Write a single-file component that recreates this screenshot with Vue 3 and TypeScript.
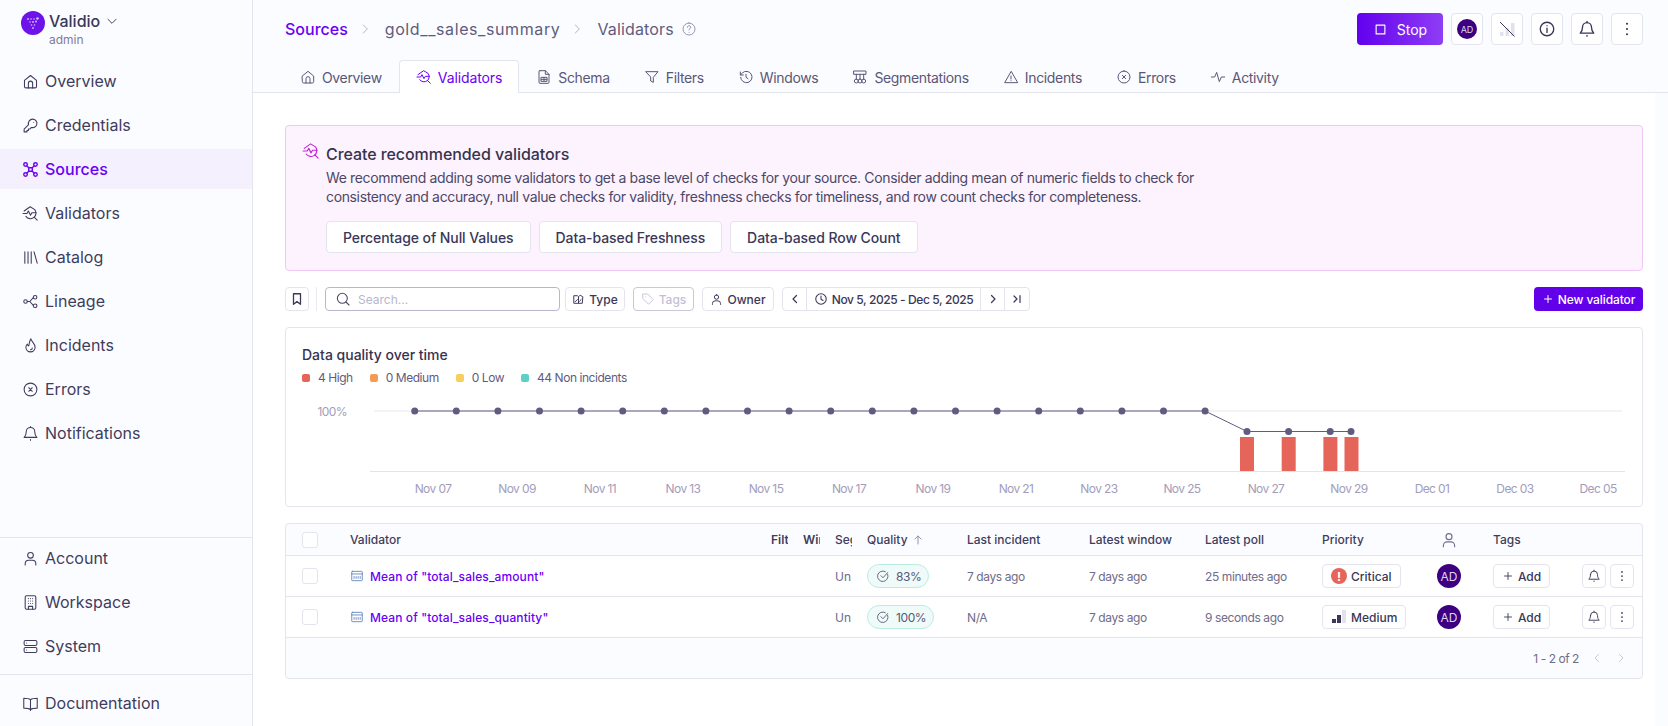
<script setup lang="ts">
import { h } from 'vue'

const paths: Record<string, string[]> = {
  home: ['M3.5 10.5 12 3.5l8.5 7V19a2 2 0 0 1-2 2h-13a2 2 0 0 1-2-2z', 'M9 21v-6.5a3 3 0 0 1 6 0V21'],
  key: ['M15 3a6 6 0 1 1-1.8 11.7L11 17H9v2H7v2H3v-4l6.3-6.3A6 6 0 0 1 15 3z', 'M16.5 7.5h.01'],
  sources: ['M5 2.5a2.5 2.5 0 1 1 0 5 2.5 2.5 0 0 1 0-5zM19 2.5a2.5 2.5 0 1 1 0 5 2.5 2.5 0 0 1 0-5zM5 16.5a2.5 2.5 0 1 1 0 5 2.5 2.5 0 0 1 0-5zM19 16.5a2.5 2.5 0 1 1 0 5 2.5 2.5 0 0 1 0-5z', 'M7 7l2.5 2.5h5L17 7M7 17l2.5-2.5h5L17 17M9.5 9.5v5M14.5 9.5v5'],
  validators: ['M3 8.5 11.5 2.500l6.500 4a8 8 0 0 1-1 11 8 8 0 0 1-11.500-1.500', 'M1.5 12h5.5l2-3.5 3 6 2-3.5h6', 'M17 17l4.500 4.500'],
  catalog: ['M4 4v16M8.5 4v16M13 4v16M17 4l4.500 16'],
  lineage: ['M5 9.5a2.5 2.5 0 1 1 0 5 2.5 2.5 0 0 1 0-5zM18.5 3.5a2.5 2.5 0 1 1 0 5 2.5 2.5 0 0 1 0-5zM18.5 15.5a2.5 2.5 0 1 1 0 5 2.5 2.5 0 0 1 0-5z', 'M7.5 12H11l5-5.5M11 12l5 5.5'],
  flame: ['M12.5 2.5c.5 4 6 6.5 6 12a6.5 6.5 0 0 1-13 0c0-2 .8-3.3 2-4.5.3 1.5 1 2.300 2 2.500 1-3 .8-6.500 3-10z', 'M12 18a2.500 2.500 0 0 0 2.500-2.500'],
  xcircle: ['M12 3a9 9 0 1 1 0 18 9 9 0 0 1 0-18z', 'M9.500 9.500l5 5M14.500 9.500l-5 5'],
  bell: ['M6 9.500a6 6 0 0 1 12 0c0 4.500 1.500 6.500 3 8H3c1.500-1.500 3-3.500 3-8z', 'M12 2v1.500M12 20.500v1'],
  user: ['M12 3.500a4 4 0 1 1 0 8 4 4 0 0 1 0-8z', 'M4.500 21v-1.500a5 5 0 0 1 5-5h5a5 5 0 0 1 5 5V21'],
  building: ['M6.500 2.500h11a2 2 0 0 1 2 2v15a2 2 0 0 1-2 2h-11a2 2 0 0 1-2-2v-15a2 2 0 0 1 2-2z', 'M9 6.500h.01M12 6.500h.01M15 6.500h.01M9 10h.01M12 10h.01M15 10h.01M9 13.500h.01M12 13.500h.01M15 13.500h.01', 'M9 21.500v-4h6v4'],
  server: ['M5 3.500h14a2 2 0 0 1 2 2v3a2 2 0 0 1-2 2H5a2 2 0 0 1-2-2v-3a2 2 0 0 1 2-2zM5 13.500h14a2 2 0 0 1 2 2v3a2 2 0 0 1-2 2H5a2 2 0 0 1-2-2v-3a2 2 0 0 1 2-2z', 'M6.500 7h.01M6.500 17h.01'],
  book: ['M12 6.500C10 5 7 4.500 2.500 4.500v14c4.500 0 7.500.5 9.500 2 2-1.500 5-2 9.500-2v-14C17 4.500 14 5 12 6.500z', 'M12 6.500V22'],
  help: ['M12 3a9 9 0 1 1 0 18 9 9 0 0 1 0-18z', 'M9.500 9.500a2.500 2.500 0 1 1 3.700 2.200c-.8.4-1.200 1-1.200 1.800M12 17h.01'],
  schema: ['M6 2.500h8l5.500 5.500v12a1.500 1.500 0 0 1-1.500 1.500H6A1.500 1.500 0 0 1 4.500 20V4A1.500 1.500 0 0 1 6 2.500z', 'M14 2.500V8h5.500', 'M8 12.500h8.500v6H8zM8 15.500h8.500M12 12.500v6'],
  filter: ['M3 4h18l-7 8.500V20l-4-2v-5.500z'],
  windows: ['M4 12.500A8.500 8.500 0 1 0 6.500 6L3.500 9', 'M3.500 4.500V9H8', 'M12 8v4.500l3 2'],
  seg: ['M3 3h18v5H3zM6.500 8v6M12 8v6M17.500 8v6', 'M6.500 15a3 3 0 1 1 0 6 3 3 0 0 1 0-6zM12 15a3 3 0 1 1 0 6 3 3 0 0 1 0-6zM17.500 15a3 3 0 1 1 0 6 3 3 0 0 1 0-6z'],
  triangle: ['M12 4 2.500 20.500h19z', 'M12 10.500v4.500M12 17.500h.01'],
  activity: ['M2 12h5l3-7 4 14 3-7h5'],
  stop: ['M5 5h14v14H5z'],
  info: ['M12 3a9 9 0 1 1 0 18 9 9 0 0 1 0-18z', 'M12 11v5.500M12 7.500h.01'],
  dots: ['M12 5h.01M12 12h.01M12 19h.01'],
  down: ['M5 9l7 7 7-7'],
  right: ['M9 5l7 7-7 7'],
  left: ['M15 5l-7 7 7 7'],
  last: ['M6 6l6 6-6 6M18 5v14'],
  bookmark: ['M6 3h12v18l-6-4.500L6 21z'],
  search: ['M11 3.500a7.500 7.500 0 1 1 0 15 7.500 7.500 0 0 1 0-15z', 'M16.500 16.500 21 21'],
  type: ['M4 5h6l2 2v12H4zM12 7l3-3 5 3-1 12H12', 'M6 16l4-4M14 15l3-3'],
  tag: ['M3.500 3.500h8l9.500 9.500-8 8-9.500-9.500z', 'M8 8h.01'],
  clock: ['M12 3a9 9 0 1 1 0 18 9 9 0 0 1 0-18z', 'M12 7v5.500l3.500 2'],
  up: ['M12 20V4M6 10l6-6 6 6'],
  plus: ['M12 5v14M5 12h14'],
  gauge: ['M20 9a9 9 0 1 1-4-4.500', 'M8.500 11.500 12 15l8-9'],
  mean: ['M4 4h16a1 1 0 0 1 1 1v14a1 1 0 0 1-1 1H4a1 1 0 0 1-1-1V5a1 1 0 0 1 1-1z', 'M3 8.500h18', 'M7 13v3M10.500 13v3M14 13v3M17.500 13v3'],
}

const Icon = (props: { name: string; size?: number; sw?: number }) =>
  h(
    'svg',
    {
      width: props.size ?? 16,
      height: props.size ?? 16,
      viewBox: '0 0 24 24',
      fill: 'none',
      stroke: 'currentColor',
      'stroke-width': props.sw ?? 1.6,
      'stroke-linecap': 'round',
      'stroke-linejoin': 'round',
    },
    (paths[props.name] ?? []).map((d) => h('path', { d })),
  )
Icon.props = ['name', 'size', 'sw']

const mainNav = [
  { label: 'Overview', icon: 'home' },
  { label: 'Credentials', icon: 'key' },
  { label: 'Sources', icon: 'sources', active: true },
  { label: 'Validators', icon: 'validators' },
  { label: 'Catalog', icon: 'catalog' },
  { label: 'Lineage', icon: 'lineage' },
  { label: 'Incidents', icon: 'flame' },
  { label: 'Errors', icon: 'xcircle' },
  { label: 'Notifications', icon: 'bell' },
]
const lowerNav = [
  { label: 'Account', icon: 'user' },
  { label: 'Workspace', icon: 'building' },
  { label: 'System', icon: 'server' },
]
const tabs = [
  { label: 'Overview', icon: 'home' },
  { label: 'Validators', icon: 'validators', active: true },
  { label: 'Schema', icon: 'schema' },
  { label: 'Filters', icon: 'filter' },
  { label: 'Windows', icon: 'windows' },
  { label: 'Segmentations', icon: 'seg' },
  { label: 'Incidents', icon: 'triangle' },
  { label: 'Errors', icon: 'xcircle' },
  { label: 'Activity', icon: 'activity' },
]
const recommended = ['Percentage of Null Values', 'Data-based Freshness', 'Data-based Row Count']
const legend = [
  { label: '4 High', color: '#e5655a' },
  { label: '0 Medium', color: '#f39a55' },
  { label: '0 Low', color: '#f7cf5c' },
  { label: '44 Non incidents', color: '#5fd0c5' },
]

const highDots = Array.from({ length: 20 }, (_, i) => 414.7 + i * 41.6)
const lowDots = [1247, 1288.6, 1330.2, 1351]
const bars = [1240, 1281.7, 1323.4, 1344.5]
const xLabels = [
  ['Nov 07', 433], ['Nov 09', 517], ['Nov 11', 600], ['Nov 13', 683], ['Nov 15', 766],
  ['Nov 17', 849], ['Nov 19', 933], ['Nov 21', 1016], ['Nov 23', 1099], ['Nov 25', 1182],
  ['Nov 27', 1266], ['Nov 29', 1349], ['Dec 01', 1432], ['Dec 03', 1515], ['Dec 05', 1598],
] as [string, number][]

const rows = [
  { name: 'Mean of "total_sales_amount"', quality: '83%', incident: '7 days ago', win: '7 days ago', poll: '25 minutes ago', priority: 'Critical' },
  { name: 'Mean of "total_sales_quantity"', quality: '100%', incident: 'N/A', win: '7 days ago', poll: '9 seconds ago', priority: 'Medium' },
]
</script>

<template>
  <div class="app">
    <aside class="side">
      <div class="brand">
        <svg class="logo" width="24" height="24" viewBox="0 0 24 24">
          <circle cx="12" cy="12" r="12" fill="#6d12e8" />
          <g fill="#d9bdf8">
            <circle cx="7" cy="8" r=".9" /><circle cx="10" cy="8" r=".8" /><circle cx="13" cy="8" r=".8" /><circle cx="16.500" cy="7.500" r="1.300" />
            <circle cx="9" cy="11" r=".8" /><circle cx="12" cy="11" r=".9" /><circle cx="15" cy="10.500" r="1" />
            <circle cx="10.500" cy="14" r=".8" /><circle cx="13.500" cy="14" r=".8" /><circle cx="12" cy="17" r=".9" />
          </g>
        </svg>
        <div class="brand-text">
          <div class="brand-name">Validio <Icon name="down" :size="14" /></div>
          <div class="brand-role">admin</div>
        </div>
      </div>
      <nav class="nav">
        <a v-for="n in mainNav" :key="n.label" class="nav-item" :class="{ active: n.active }">
          <Icon :name="n.icon" :size="17" :sw="n.active ? 2 : 1.500" /><span>{{ n.label }}</span>
        </a>
      </nav>
      <nav class="nav lower">
        <a v-for="n in lowerNav" :key="n.label" class="nav-item">
          <Icon :name="n.icon" :size="17" :sw="1.500" /><span>{{ n.label }}</span>
        </a>
      </nav>
      <nav class="nav docs">
        <a class="nav-item"><Icon name="book" :size="17" :sw="1.500" /><span>Documentation</span></a>
      </nav>
    </aside>

    <main class="main">
      <header class="head">
        <div class="topbar">
          <div class="crumbs">
            <span class="crumb-link">Sources</span>
            <Icon class="crumb-sep" name="right" :size="14" :sw="1.400" />
            <span class="crumb-source">gold__sales_summary</span>
            <Icon class="crumb-sep" name="right" :size="14" :sw="1.400" />
            <span class="crumb-page">Validators</span>
            <Icon class="crumb-help" name="help" :size="16" :sw="1.300" />
          </div>
          <div class="top-actions">
            <button class="stop"><Icon name="stop" :size="15" :sw="1.800" />Stop</button>
            <button class="square"><span class="avatar small">AD</span></button>
            <button class="square">
              <svg width="18" height="18" viewBox="0 0 18 18">
                <rect x="2" y="12" width="3.500" height="4" fill="#e2e2ec" />
                <rect x="7.500" y="8" width="3.500" height="8" fill="#e2e2ec" />
                <rect x="13" y="3" width="3.500" height="13" fill="#e2e2ec" />
                <path d="M2 2l14.500 14.500" stroke="#3a3758" stroke-width="1" />
              </svg>
            </button>
            <button class="square"><Icon name="info" :size="18" :sw="1.800" /></button>
            <button class="square"><Icon name="bell" :size="18" :sw="1.800" /></button>
            <button class="square"><Icon name="dots" :size="18" :sw="2.800" /></button>
          </div>
        </div>
        <div class="tabs">
          <div v-for="t in tabs" :key="t.label" class="tab" :class="{ active: t.active }">
            <Icon :name="t.icon" :size="16" :sw="1.500" /><span>{{ t.label }}</span>
          </div>
        </div>
      </header>

      <div class="body">
        <div class="content">
          <section class="banner">
            <Icon class="banner-icon" name="validators" :size="18" :sw="1.500" />
            <div class="banner-main">
              <h2 class="banner-title">Create recommended validators</h2>
              <p class="banner-text">We recommend adding some validators to get a base level of checks for your source. Consider adding mean of numeric fields to check for consistency and accuracy, null value checks for validity, freshness checks for timeliness, and row count checks for completeness.</p>
              <div class="banner-btns">
                <button v-for="r in recommended" :key="r" class="rec">{{ r }}</button>
              </div>
            </div>
          </section>

          <div class="toolbar">
            <button class="tool icon-only"><Icon name="bookmark" :size="14" :sw="2.200" /></button>
            <span class="vsep"></span>
            <label class="search">
              <Icon name="search" :size="16" :sw="1.600" />
              <span class="placeholder">Search...</span>
            </label>
            <button class="tool t-type"><Icon name="type" :size="13" :sw="1.800" />Type</button>
            <button class="tool t-tags"><Icon name="tag" :size="14" :sw="1.500" />Tags</button>
            <button class="tool t-owner"><Icon name="user" :size="13" :sw="1.800" />Owner</button>
            <div class="range">
              <span class="range-btn w25"><Icon name="left" :size="12" :sw="2.400" /></span>
              <span class="range-btn date"><Icon name="clock" :size="14" :sw="1.800" />Nov 5, 2025 - Dec 5, 2025</span>
              <span class="range-btn w24"><Icon name="right" :size="12" :sw="2.400" /></span>
              <span class="range-btn w24 last"><Icon name="last" :size="12" :sw="2.400" /></span>
            </div>
            <button class="new"><Icon name="plus" :size="12" :sw="2" />New validator</button>
          </div>

          <section class="card chart">
            <h3 class="chart-title">Data quality over time</h3>
            <div class="legend">
              <span v-for="l in legend" :key="l.label" class="legend-item">
                <i class="swatch" :style="{ background: l.color }"></i>{{ l.label }}
              </span>
            </div>
            <svg class="plot" width="1356" height="110" viewBox="286 396 1356 110">
              <text x="347" y="416" text-anchor="end" class="tick">100%</text>
              <line x1="374" y1="411" x2="1622" y2="411" stroke="#f3f3f6" stroke-width="2" />
              <line x1="370" y1="471.500" x2="1625" y2="471.500" stroke="#e3e3ee" />
              <rect v-for="b in bars" :key="b" :x="b" y="437" width="14" height="34" fill="#e5655a" />
              <line x1="414.700" y1="411" x2="1205" y2="411" stroke="#a9a6bd" stroke-width="2" />
              <polyline points="1205,411 1247,431.500 1351,431.500" fill="none" stroke="#5f5c80" stroke-width="1" />
              <circle v-for="d in highDots" :key="d" :cx="d" cy="411" r="3.500" fill="#5f5c80" />
              <circle v-for="d in lowDots" :key="d" :cx="d" cy="431.500" r="3.500" fill="#5f5c80" />
              <text v-for="x in xLabels" :key="x[0]" :x="x[1]" y="493" text-anchor="middle" class="tick">{{ x[0] }}</text>
            </svg>
          </section>

          <section class="card table">
            <div class="cols thead">
              <div><span class="check"></span></div>
              <div>Validator</div>
              <div class="clip strong">Filters</div>
              <div class="clip strong">Windows</div>
              <div class="clip">Segments</div>
              <div class="quality-h">Quality <Icon class="sort" name="up" :size="12" :sw="1.800" /></div>
              <div>Last incident</div>
              <div>Latest window</div>
              <div>Latest poll</div>
              <div>Priority</div>
              <div class="owner-h"><Icon name="user" :size="18" :sw="1.500" /></div>
              <div>Tags</div>
            </div>
            <div v-for="r in rows" :key="r.name" class="cols trow">
              <div><span class="check"></span></div>
              <div class="name"><Icon class="mean" name="mean" :size="14" :sw="1.500" /><span>{{ r.name }}</span></div>
              <div></div>
              <div></div>
              <div class="clip un">Unsegmented</div>
              <div><span class="pill"><Icon name="gauge" :size="14" :sw="1.500" />{{ r.quality }}</span></div>
              <div>{{ r.incident }}</div>
              <div>{{ r.win }}</div>
              <div>{{ r.poll }}</div>
              <div>
                <span class="prio">
                  <span v-if="r.priority === 'Critical'" class="crit">!</span>
                  <svg v-else width="16" height="16" viewBox="0 0 16 16">
                    <rect x="1" y="10" width="4" height="4" fill="#3a3758" />
                    <rect x="6" y="6" width="4" height="8" fill="#3a3758" />
                    <rect x="11" y="1" width="4" height="13" fill="#e2e2ec" />
                  </svg>
                  {{ r.priority }}
                </span>
              </div>
              <div><span class="avatar">AD</span></div>
              <div class="tags">
                <span class="add"><Icon name="plus" :size="12" :sw="1.800" />Add</span>
                <span class="row-actions">
                  <span class="mini"><Icon name="bell" :size="14" :sw="1.600" /></span>
                  <span class="mini"><Icon name="dots" :size="14" :sw="3" /></span>
                </span>
              </div>
            </div>
            <div class="tfoot">
              <span>1 - 2 of 2</span>
              <Icon class="pg" name="left" :size="12" :sw="1.600" />
              <Icon class="pg" name="right" :size="12" :sw="1.600" />
            </div>
          </section>
        </div>
        <div class="track"></div>
      </div>
    </main>
  </div>
</template>

<style>
html, body { margin: 0; background: #fff; }
</style>

<style scoped>
.app { display: flex; width: 1668px; height: 726px; overflow: hidden; font-family: Inter, "Liberation Sans", sans-serif; color: #3a3758; background: #fff; }
.side { width: 252px; flex: none; display: flex; flex-direction: column; background: #fbfcff; border-right: 1px solid #e4e4ee; }
.brand { display: flex; gap: 4px; padding: 11px 0 0 21px; height: 50px; }
.logo { flex: none; }
.brand-name { display: flex; align-items: center; gap: 5px; font-size: 16px; font-weight: 500; line-height: 20px; }
.brand-role { font-size: 12px; color: #7f7b9b; line-height: 16px; margin-top: 1px; }
.nav { display: flex; flex-direction: column; gap: 4px; }
.nav-item { display: flex; align-items: center; gap: 6px; height: 40px; padding-left: 22px; font-size: 16px; color: #3f3c5c; }
.nav-item.active { background: #f4f0fd; color: #6a00f5; font-weight: 500; }
.lower { margin-top: auto; border-top: 1px solid #e4e4ee; }
.docs { margin-top: 8px; border-top: 1px solid #e4e4ee; padding: 8px 0 3px; }

.main { flex: 1; min-width: 0; display: flex; flex-direction: column; }
.head { background: #fbfcff; border-bottom: 1px solid #e4e4ee; height: 93px; box-sizing: border-box; flex: none; }
.topbar { display: flex; align-items: center; justify-content: space-between; height: 58px; margin-bottom: 2px; padding: 0 25px 0 32px; box-sizing: border-box; }
.crumbs { display: flex; align-items: center; font-size: 16px; color: #5f5c7e; }
.crumb-link { color: #6a00f5; font-weight: 500; }
.crumb-sep { margin: 0 13px 0 10px; color: #a6a3bc; }
.crumb-source { letter-spacing: .6px; }
.crumb-page { letter-spacing: .15px; }
.crumb-help { margin-left: 7px; color: #8a87a3; }
.top-actions { display: flex; gap: 8px; align-items: center; }
button { font-family: inherit; cursor: pointer; }
.stop { display: flex; align-items: center; justify-content: center; gap: 9px; width: 86px; height: 32px; border: 0; border-radius: 4px; color: #fff; font-size: 14px; background: linear-gradient(90deg, #6200ee, #8f3df5); }
.square { display: flex; align-items: center; justify-content: center; width: 32px; height: 32px; padding: 0; background: #fff; border: 1px solid #e4e4ee; border-radius: 4px; color: #3a3758; }
.avatar { display: inline-flex; align-items: center; justify-content: center; width: 24px; height: 24px; border-radius: 50%; background: #3d0080; color: #ddd6ee; font-size: 12px; letter-spacing: 0; }
.avatar.small { width: 20px; height: 20px; font-size: 9px; }
.tabs { display: flex; padding-left: 30px; height: 32px; }
.tab { display: flex; align-items: center; gap: 6px; height: 32px; padding: 0 16px; border: 1px solid transparent; border-bottom: 0; font-size: 14px; letter-spacing: -.35px; color: #5a5776; }
.tab.active { background: #fff; color: #6a00f5; border-color: #e4e4ee; border-radius: 4px 4px 0 0; letter-spacing: -.1px; }

.body { flex: 1; display: flex; min-height: 0; }
.content { flex: 1; min-width: 0; padding: 32px 12px 0 32px; }
.track { width: 13px; flex: none; background: #fbfcff; }
.banner { display: flex; box-sizing: border-box; height: 146px; padding: 16px 16px 0 16px; gap: 4px; background: #fdf3fe; border: 1px solid #f2c7f7; border-radius: 4px; }
.banner-icon { color: #c026d3; flex: none; }
.banner-main { padding-left: 2px; }
.banner-title { margin: 0; font-size: 16px; font-weight: 500; line-height: 24px; letter-spacing: -.07px; color: #36334f; }
.banner-text { margin: 2px 0 0; max-width: 900px; font-size: 14px; line-height: 19px; letter-spacing: -.36px; color: #4b4866; }
.banner-btns { display: flex; gap: 8px; margin-top: 15px; }
.rec { height: 32px; padding: 0 16px; background: #fff; border: 1px solid #e4e4ee; border-radius: 4px; font-size: 14px; font-weight: 500; letter-spacing: -.08px; color: #3a3758; }

.toolbar { display: flex; align-items: center; height: 24px; margin-top: 16px; gap: 8px; }
.tool { display: inline-flex; align-items: center; justify-content: center; gap: 4px; height: 24px; padding: 0; background: #fff; border: 1px solid #e4e4ee; border-radius: 4px; font-size: 12px; font-weight: 500; color: #3a3758; }
.icon-only { width: 24px; }
.vsep { width: 1px; height: 24px; background: #e9e9f1; margin-left: -1px; }
.search { display: flex; align-items: center; gap: 7px; width: 235px; height: 24px; box-sizing: border-box; padding: 0 9px; border: 1px solid #b9b7d0; border-radius: 4px; background: #fff; color: #4b4866; }
.placeholder { font-size: 12px; color: #b9b7cc; }
.t-type { width: 60px; margin-left: -3px; }
.t-tags { width: 61px; color: #c2bfd6; border-color: #c9c7da; }
.t-owner { width: 72px; }
.range { display: flex; height: 24px; box-sizing: border-box; border: 1px solid #e4e4ee; border-radius: 4px; background: #fff; font-size: 12px; font-weight: 500; }
.range-btn { display: flex; align-items: center; justify-content: center; border-right: 1px solid #e4e4ee; box-sizing: border-box; }
.range-btn.last { border-right: 0; }
.w25 { width: 24px; }
.w24 { width: 24px; }
.date { width: 174px; gap: 4px; letter-spacing: -.4px; }
.new { margin-left: auto; display: flex; align-items: center; justify-content: center; gap: 4px; width: 109px; height: 24px; border: 0; border-radius: 4px; background: #6200ea; color: #fff; font-size: 12px; font-weight: 500; letter-spacing: -.1px; }

.card { background: #fff; border: 1px solid #e4e4ee; border-radius: 4px; }
.chart { margin-top: 16px; }
.chart-title { margin: 17px 0 0 16px; font-size: 14px; font-weight: 500; line-height: 20px; color: #36334f; }
.legend { display: flex; gap: 17px; margin: 5px 0 0 16px; font-size: 12px; line-height: 16px; letter-spacing: -.45px; color: #5f5c7e; }
.legend-item { display: inline-flex; align-items: center; gap: 8px; }
.swatch { width: 8px; height: 8px; border-radius: 2px; }
.plot { display: block; margin-top: 10px; }
.tick { font-family: Inter, "Liberation Sans", sans-serif; font-size: 12px; letter-spacing: -.6px; fill: #a39db9; }

.table { margin-top: 16px; background: #fbfcff; }
.cols { display: grid; grid-template-columns: 64px 421px 32px 32px 32px 100px 122px 116px 117px 115px 56px 1fr; align-items: center; font-size: 12px; }
.thead { height: 32px; box-sizing: border-box; font-weight: 500; color: #3f3c5c; border-bottom: 1px solid #e4e4ee; }
.trow { height: 40px; color: #6f6c8a; background: #fff; border-bottom: 1px solid #e4e4ee; letter-spacing: -.4px; }
.check { display: block; width: 14px; height: 14px; margin-left: 16px; border: 1px solid #e4e4ee; border-radius: 3px; background: #fff; }
.clip { width: 17px; overflow: hidden; white-space: nowrap; }
.clip.un { width: 16px; letter-spacing: 0; }
.strong { font-weight: 600; }
.quality-h { display: flex; align-items: center; gap: 4px; }
.sort { color: #8b88a3; }
.owner-h { display: flex; color: #6f6c8a; margin-left: 3px; }
.name { display: flex; align-items: center; gap: 6px; color: #6a00f5; font-weight: 500; letter-spacing: .1px; }
.mean { color: #5f82bd; }
.pill { display: inline-flex; align-items: center; gap: 6px; height: 24px; box-sizing: border-box; padding: 0 7px 0 8px; background: #eefbf9; border: 1px solid #bbece3; border-radius: 12px; color: #5a5776; }
.prio { display: inline-flex; align-items: center; gap: 4px; height: 24px; box-sizing: border-box; padding: 0 8px; background: #fff; border: 1px solid #e4e4ee; border-radius: 4px; color: #3a3758; font-weight: 500; letter-spacing: 0; }
.crit { display: flex; align-items: center; justify-content: center; width: 16px; height: 16px; border-radius: 50%; background: #e5655a; color: #fff; font-size: 12px; font-weight: 700; }
.tags { display: flex; align-items: center; justify-content: space-between; padding-right: 8px; }
.add { display: inline-flex; align-items: center; justify-content: center; gap: 4px; width: 57px; height: 24px; box-sizing: border-box; background: #fff; border: 1px solid #e4e4ee; border-radius: 4px; color: #3a3758; font-weight: 500; letter-spacing: 0; }
.row-actions { display: flex; gap: 4px; }
.mini { display: flex; align-items: center; justify-content: center; width: 24px; height: 24px; box-sizing: border-box; background: #fff; border: 1px solid #e4e4ee; border-radius: 4px; color: #3a3758; }
.tfoot { display: flex; align-items: center; justify-content: flex-end; height: 40px; padding-right: 15px; gap: 12px; font-size: 12px; letter-spacing: -.45px; color: #6f6c8a; }
.pg { color: #b9b7cc; }
</style>
